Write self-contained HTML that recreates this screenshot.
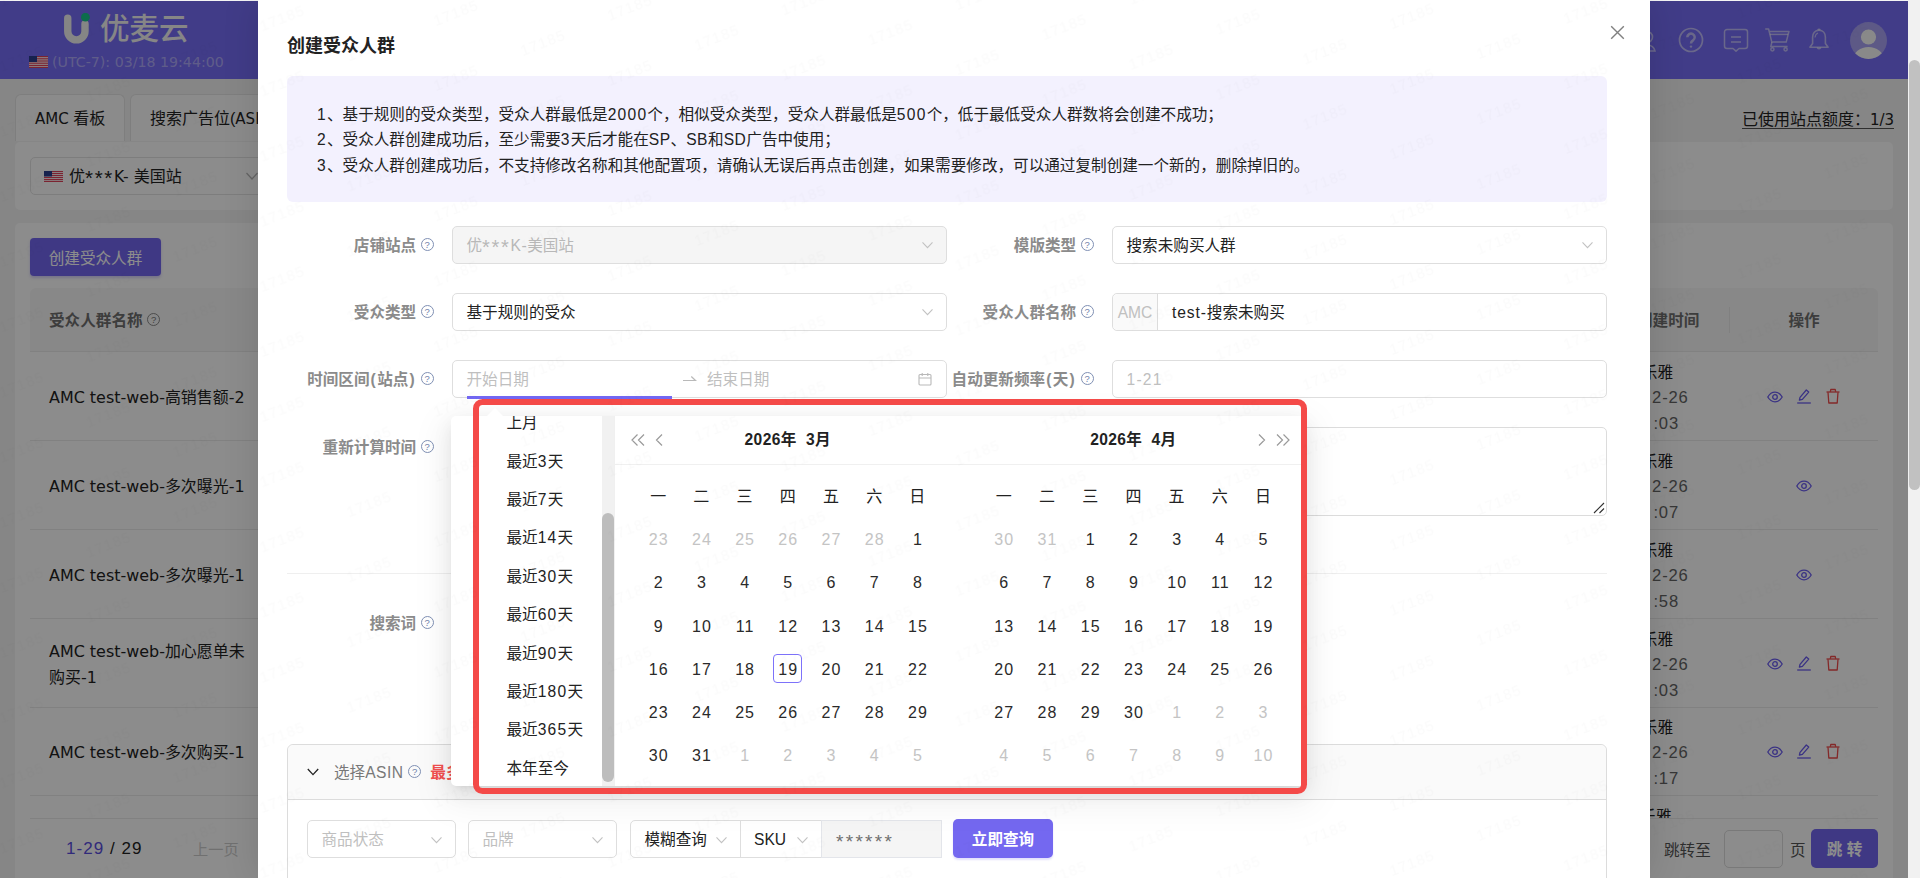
<!DOCTYPE html>
<html lang="zh-CN">
<head>
<meta charset="utf-8">
<title>优麦云 - 创建受众人群</title>
<style>
*{box-sizing:border-box;margin:0;padding:0}
html,body{width:1920px;height:878px;overflow:hidden;background:#fff}
body{position:relative;font-family:"Liberation Sans","Noto Sans CJK SC",sans-serif;font-size:15.6px;color:#222;line-height:1.5}
.abs{position:absolute}
.dj{font-family:"DejaVu Sans","Liberation Sans","Noto Sans CJK SC",sans-serif}
/* ---------- underlying page ---------- */
#page{position:absolute;left:0;top:0;width:1908px;height:878px;background:#f4f4f4;overflow:hidden}
#hdr{position:absolute;left:0;top:1px;width:1908px;height:78px;background:#776ef8}
.card{position:absolute;background:#fff;border-radius:5px}
.tab{position:absolute;top:93.500px;height:47.500px;background:#fdfdfd;border:1px solid #e6e6e6;border-bottom:none;border-radius:6px 6px 0 0;font-size:16px;line-height:48px;color:#222;white-space:nowrap;overflow:hidden}
.trow{position:absolute;left:30px;width:1848px;border-bottom:1px solid #ebebeb}
.tname{position:absolute;left:49px;font-size:15.950px;color:#222;white-space:nowrap;line-height:26px}
.tdate{position:absolute;left:1500px;width:171.500px;height:78px;font-size:15.600px;line-height:25.400px;color:#555;white-space:nowrap}
.tdate b,.tdate span{position:absolute;top:0;font-weight:400;color:#222}
.tdate span{color:#646464;font-size:16.600px;letter-spacing:.850px}
.ico{position:absolute;width:16px;height:16px}
#mask{position:absolute;left:0;top:1px;width:1908px;height:877px;background:rgba(0,0,0,.45)}
/* ---------- page scrollbar ---------- */
#sbar{position:absolute;left:1908px;top:0;width:12px;height:878px;background:#f1f1f1}
#sbar i{position:absolute;left:1px;top:60px;width:11px;height:430px;background:#c1c1c1;border-radius:6px}
/* ---------- modal ---------- */
#modal{position:absolute;left:258px;top:0;width:1392px;height:878px;background:#fff;overflow:hidden;box-shadow:0 0 34px rgba(0,0,0,.130)}
.q{display:inline-block;width:13.500px;height:13.500px;border:1px solid #7f90b4;border-radius:50%;font-size:9.500px;line-height:11px;text-align:center;font-weight:400;color:#6f82aa;vertical-align:3.500px;font-family:"Liberation Sans",sans-serif}
.lbl{position:absolute;font-size:15.600px;font-weight:700;line-height:26px;color:#8b8b8b;white-space:nowrap;text-align:right}
.inp{position:absolute;height:38px;border:1px solid #dedede;border-radius:5px;background:#fff;font-size:15.600px;line-height:38.500px;padding-left:13.500px;color:#222;white-space:nowrap}
#drop{position:absolute;left:451.300px;top:416px;width:854.700px;height:370px;background:#fff;border-radius:5px;box-shadow:0 7px 19px 0 rgba(0,0,0,.080),0 4px 7px -5px rgba(0,0,0,.120),0 11px 34px 10px rgba(0,0,0,.050)}
.ps{position:absolute;left:55.200px;font-size:15.600px;line-height:26px;color:#222;white-space:nowrap}
.c{position:absolute;width:43.200px;margin-left:-21.600px;height:28px;font-size:16px;line-height:30px;text-align:center;color:#2a2a2a;white-space:nowrap;letter-spacing:1.100px;padding-left:1.100px}
.c.w{line-height:28px;color:#222}
.c.o{color:#c4c4c4}
.c.t:after{content:"";box-sizing:border-box;position:absolute;left:6.600px;top:-.800px;width:29px;height:29px;border:1px solid #7d72fa;border-radius:4px}
#red{position:absolute;left:472.500px;top:399px;width:834px;height:394.500px;border:6px solid #f44a48;border-radius:9.500px}
.n{letter-spacing:1.250px}
.l{letter-spacing:.500px}
.pr{letter-spacing:1.500px;margin-left:1px}
#wm{position:absolute;left:0;top:0;pointer-events:none}
</style>
</head>
<body>
<div id="page">
  <div id="hdr">
    <svg class="abs" style="left:62px;top:12px" width="34" height="34" viewBox="0 0 34 34"><path d="M5.75 5.25V18.2A8.625 8.625 0 0 0 23 18.2V11" fill="none" stroke="#f2f2f2" stroke-width="7.4" stroke-linecap="round"/><circle cx="23.4" cy="4.2" r="4.4" fill="#19c58b"/></svg>
    <div class="abs" style="left:100px;top:6px;font-size:29.5px;line-height:44px;color:#f4f4f4;font-weight:500;white-space:nowrap">优麦云</div>
    <svg class="abs" style="left:29px;top:55px" width="19" height="12" viewBox="0 0 19 12"><rect width="19" height="12" fill="#fff"/><g fill="#e0425a"><rect y="0" width="19" height="1.2"/><rect y="2.2" width="19" height="1.2"/><rect y="4.4" width="19" height="1.2"/><rect y="6.6" width="19" height="1.2"/><rect y="8.8" width="19" height="1.2"/><rect y="10.8" width="19" height="1.2"/></g><rect width="8" height="6" fill="#2b3f8f"/></svg>
    <div class="abs dj" style="left:52px;top:50px;font-size:14.2px;line-height:22px;color:rgba(255,255,255,.42);white-space:nowrap">(UTC-7): 03/18 19:44:00</div>
    <!-- right icons -->
    <svg class="abs" style="left:1637.500px;top:26px" width="26" height="26" viewBox="0 0 26 26" fill="none" stroke="rgba(255,255,255,.55)" stroke-width="1.600"><circle cx="9" cy="10" r="5.500"/><path d="M1 24c1-4 4-6 8-6s7 2 8 6z"/></svg>
    <svg class="abs" style="left:1678px;top:26px" width="26" height="26" viewBox="0 0 26 26" fill="none" stroke="rgba(255,255,255,.55)" stroke-width="1.5"><circle cx="13" cy="13" r="11.500" stroke-width="1.700"/><path d="M9.300 10.300a3.700 3.700 0 1 1 5.700 3.100c-1.400.900-2 1.500-2 3.100" stroke-width="2.500"/><circle cx="13" cy="19.600" r="1.200" fill="rgba(255,255,255,.55)" stroke="none"/></svg>
    <svg class="abs" style="left:1723px;top:27px" width="26" height="26" viewBox="0 0 26 26" fill="none" stroke="rgba(255,255,255,.55)" stroke-width="1.5" stroke-linejoin="round"><path d="M4 1.5h18a2.5 2.5 0 0 1 2.500 2.500v14a2.500 2.500 0 0 1-2.500 2.500h-6l-3 2.600-3-2.600h-6a2.500 2.500 0 0 1-2.500-2.500v-14a2.500 2.500 0 0 1 2.500-2.500z"/><path d="M8 9h10M8 14h10"/></svg>
    <svg class="abs" style="left:1764px;top:26px" width="28" height="26" viewBox="0 0 28 26" fill="none" stroke="rgba(255,255,255,.55)" stroke-width="1.500" stroke-linejoin="round"><path d="M1.200 2h3.400l3.200 13.100h14.400l2.750-10.700H5.400"/><path d="M5.900 7.400h18.200"/><path d="M7.900 15.100l-1.100 4.400h16.800"/><circle cx="8.400" cy="22.300" r="1.600"/><circle cx="21.600" cy="22.300" r="1.600"/></svg>
    <svg class="abs" style="left:1807px;top:26px" width="24" height="26" viewBox="0 0 24 26" fill="none" stroke="rgba(255,255,255,.55)" stroke-width="1.600" stroke-linejoin="round"><path d="M12 3.300c-4 0-6.400 3-6.400 7v6.200l-2.700 3.700h18.200l-2.700-3.700v-6.200c0-4-2.400-7-6.400-7z"/><path d="M10.900 3.100a1.200 1.200 0 0 1 2.200 0"/><path d="M10.300 20.500a1.800 1.800 0 0 0 3.400 0"/><path d="M8 10.500c.200-2.200 1.300-3.800 3-4.400" stroke-width="1.100"/></svg>
    <svg class="abs" style="left:1850px;top:21px" width="37" height="37" viewBox="0 0 37 37"><defs><clipPath id="avc"><circle cx="18.500" cy="18.500" r="18.500"/></clipPath></defs><circle cx="18.500" cy="18.500" r="18.500" fill="#a9a2f5"/><g clip-path="url(#avc)" fill="#fafafa"><circle cx="18.500" cy="15" r="7.600"/><ellipse cx="18.500" cy="37" rx="15" ry="12"/></g></svg>
  </div>
  <!--P0-->
  <div class="tab" style="left:14.500px;width:110.500px;padding-left:19.500px"><span class="dj" style="font-size:15px">AMC</span> 看板</div>
  <div class="tab" style="left:130px;width:170px;padding-left:19px">搜索广告位(<span class="dj" style="font-size:15px">ASIN</span>)</div>
  <div class="abs" style="left:1742px;top:107px;font-size:16px;color:#222;white-space:nowrap;border-bottom:1px solid #555;height:22px;line-height:25px">已使用站点额度：<span class="dj" style="font-size:15px">1/3</span></div>
  <div class="card" style="left:15px;top:142px;width:1878px;height:67.500px"></div>
  <div class="abs" style="left:30px;top:156.500px;width:300px;height:38px;border:1px solid #e4e4e4;border-radius:5px;background:#fff"></div>
  <svg class="abs" style="left:44px;top:171px" width="19" height="11" viewBox="0 0 19 11"><rect width="19" height="11" fill="#fff"/><g fill="#e0425a"><rect y="0" width="19" height="1.100"/><rect y="2" width="19" height="1.100"/><rect y="4" width="19" height="1.100"/><rect y="6" width="19" height="1.100"/><rect y="8" width="19" height="1.100"/><rect y="9.900" width="19" height="1.100"/></g><rect width="8" height="5.500" fill="#2b3f8f"/></svg>
  <div class="abs" style="left:69px;top:164px;font-size:16px;line-height:26px;color:#222;white-space:nowrap">优<span style="font-size:20.500px;letter-spacing:1.700px;line-height:0;vertical-align:-2.500px">***</span><span class="dj" style="font-size:15.500px;letter-spacing:.500px">K-</span> 美国站</div>
  <svg class="abs" style="left:245px;top:170px" width="14" height="12" viewBox="0 0 14 12" fill="none" stroke="#b8b8b8" stroke-width="1.300"><path d="M1.500 3l5.500 6 5.500-6"/></svg>
  <div class="card" style="left:15px;top:223px;width:1878px;height:700px"></div>
  <div class="abs" style="left:30px;top:238px;width:131px;height:38px;background:#7467f0;border-radius:4px;color:#fff;font-size:15.600px;line-height:41px;text-align:center;box-shadow:0 2px 3px rgba(116,103,240,.300)">创建受众人群</div>
  <div class="abs" style="left:30px;top:288px;width:1848px;height:64px;background:#f8f8f8;border-bottom:1px solid #ebebeb;border-radius:6px 6px 0 0"></div>
  <div class="abs" style="left:49px;top:308px;font-size:15.600px;font-weight:700;line-height:26px;color:#6f6f6f;white-space:nowrap">受众人群名称 <span class="q" style="border-color:#8a8a8a;color:#777">?</span></div>
  <div class="abs" style="left:1637px;top:308px;font-size:15.600px;font-weight:700;line-height:26px;color:#6f6f6f;white-space:nowrap">创建时间</div>
  <div class="abs" style="left:1729px;top:307px;width:1px;height:26px;background:#e9e9e9"></div>
  <div class="abs" style="left:1788.500px;top:308px;font-size:15.600px;font-weight:700;line-height:26px;color:#6f6f6f;white-space:nowrap">操作</div>
  <div class="trow" style="top:352px;height:89px"></div>
  <div class="tname dj" style="top:384.5px">AMC test-web-高销售额-2</div>
  <div class="tdate" style="top:360px"><b style="right:-1.5px">乐雅</b><span style="top:25.400px;right:-17.2px">2-26</span><span style="top:50.800px;right:-7.5px">:03</span></div>
  <svg class="ico" style="left:1766.5px;top:388.5px" viewBox="0 0 16 16" fill="none" stroke="#6a5cf0" stroke-width="1.300"><path d="M.800 8c1.800-3.100 4.300-4.800 7.200-4.800s5.400 1.700 7.200 4.800c-1.800 3.100-4.300 4.800-7.200 4.800s-5.400-1.700-7.200-4.800z"/><circle cx="8" cy="8" r="2.300"/></svg>
  <svg class="ico" style="left:1796px;top:388px" viewBox="0 0 16 16" fill="none" stroke="#6a5cf0" stroke-width="1.300" stroke-linejoin="round"><path d="M4 9.300l6.300-7.300 2.400 2.100-6.300 7.300-3 .700z"/><path d="M1.200 15h13.600"/></svg>
  <svg class="ico" style="left:1825px;top:388px" viewBox="0 0 16 16" fill="none" stroke="#f04b4b" stroke-width="1.300" stroke-linejoin="round"><path d="M1.500 4h13"/><path d="M5.300 3.800l.500-2.300h4.400l.500 2.300"/><path d="M3 4.200l.800 10.800h8.400l.800-10.800"/></svg>
  <div class="trow" style="top:441px;height:89px"></div>
  <div class="tname dj" style="top:473.5px">AMC test-web-多次曝光-1</div>
  <div class="tdate" style="top:449px"><b style="right:-1.5px">乐雅</b><span style="top:25.400px;right:-17.2px">2-26</span><span style="top:50.800px;right:-7.5px">:07</span></div>
  <svg class="ico" style="left:1795.5px;top:477.5px" viewBox="0 0 16 16" fill="none" stroke="#6a5cf0" stroke-width="1.300"><path d="M.800 8c1.800-3.100 4.300-4.800 7.200-4.800s5.400 1.700 7.200 4.800c-1.800 3.100-4.300 4.800-7.200 4.800s-5.400-1.700-7.200-4.800z"/><circle cx="8" cy="8" r="2.300"/></svg>
  <div class="trow" style="top:530px;height:89px"></div>
  <div class="tname dj" style="top:562.5px">AMC test-web-多次曝光-1</div>
  <div class="tdate" style="top:538px"><b style="right:-1.5px">乐雅</b><span style="top:25.400px;right:-17.2px">2-26</span><span style="top:50.800px;right:-7.5px">:58</span></div>
  <svg class="ico" style="left:1795.5px;top:566.5px" viewBox="0 0 16 16" fill="none" stroke="#6a5cf0" stroke-width="1.300"><path d="M.800 8c1.800-3.100 4.300-4.800 7.200-4.800s5.400 1.700 7.200 4.800c-1.800 3.100-4.300 4.800-7.200 4.800s-5.400-1.700-7.200-4.800z"/><circle cx="8" cy="8" r="2.300"/></svg>
  <div class="trow" style="top:619px;height:89px"></div>
  <div class="tname dj" style="top:638.5px">AMC test-web-加心愿单未<br>购买-1</div>
  <div class="tdate" style="top:627px"><b style="right:-1.5px">乐雅</b><span style="top:25.400px;right:-17.2px">2-26</span><span style="top:50.800px;right:-7.5px">:03</span></div>
  <svg class="ico" style="left:1766.5px;top:655.5px" viewBox="0 0 16 16" fill="none" stroke="#6a5cf0" stroke-width="1.300"><path d="M.800 8c1.800-3.100 4.300-4.800 7.200-4.800s5.400 1.700 7.200 4.800c-1.800 3.100-4.300 4.800-7.200 4.800s-5.400-1.700-7.200-4.800z"/><circle cx="8" cy="8" r="2.300"/></svg>
  <svg class="ico" style="left:1796px;top:655px" viewBox="0 0 16 16" fill="none" stroke="#6a5cf0" stroke-width="1.300" stroke-linejoin="round"><path d="M4 9.300l6.300-7.300 2.400 2.100-6.300 7.300-3 .700z"/><path d="M1.200 15h13.600"/></svg>
  <svg class="ico" style="left:1825px;top:655px" viewBox="0 0 16 16" fill="none" stroke="#f04b4b" stroke-width="1.300" stroke-linejoin="round"><path d="M1.500 4h13"/><path d="M5.300 3.800l.500-2.300h4.400l.500 2.300"/><path d="M3 4.200l.800 10.800h8.400l.800-10.800"/></svg>
  <div class="trow" style="top:707px;height:89px"></div>
  <div class="tname dj" style="top:739.5px">AMC test-web-多次购买-1</div>
  <div class="tdate" style="top:715px"><b style="right:-1.5px">乐雅</b><span style="top:25.400px;right:-17.2px">2-26</span><span style="top:50.800px;right:-7.5px">:17</span></div>
  <svg class="ico" style="left:1766.5px;top:743.5px" viewBox="0 0 16 16" fill="none" stroke="#6a5cf0" stroke-width="1.300"><path d="M.800 8c1.800-3.100 4.300-4.800 7.200-4.800s5.400 1.700 7.200 4.800c-1.800 3.100-4.300 4.800-7.200 4.800s-5.400-1.700-7.200-4.800z"/><circle cx="8" cy="8" r="2.300"/></svg>
  <svg class="ico" style="left:1796px;top:743px" viewBox="0 0 16 16" fill="none" stroke="#6a5cf0" stroke-width="1.300" stroke-linejoin="round"><path d="M4 9.300l6.300-7.300 2.400 2.100-6.300 7.300-3 .700z"/><path d="M1.200 15h13.600"/></svg>
  <svg class="ico" style="left:1825px;top:743px" viewBox="0 0 16 16" fill="none" stroke="#f04b4b" stroke-width="1.300" stroke-linejoin="round"><path d="M1.500 4h13"/><path d="M5.300 3.800l.500-2.300h4.400l.500 2.300"/><path d="M3 4.200l.800 10.800h8.400l.800-10.800"/></svg>
  <div class="tdate" style="top:804px"><b style="right:0">乐雅</b></div>
  <div class="abs" style="left:15px;top:818px;width:1878px;height:60px;background:#fff"></div><div class="abs" style="left:30px;top:818px;width:1848px;height:1px;background:#ececec"></div>
  <div class="abs" style="left:66px;top:835.500px;font-size:17px;line-height:26px;color:#222;white-space:nowrap;letter-spacing:1.050px"><span style="color:#5a4ee0">1-29</span> / 29</div>
  <div class="abs" style="left:193px;top:836.500px;font-size:15.200px;line-height:26px;color:#cdcdcd;white-space:nowrap">上一页</div>
  <div class="abs" style="left:1664px;top:837.500px;font-size:15.600px;line-height:26px;color:#555;white-space:nowrap">跳转至</div>
  <div class="abs" style="left:1723.500px;top:830px;width:59.500px;height:38px;border:1px solid #dcdcdc;border-radius:5px;background:#fff"></div>
  <div class="abs" style="left:1790px;top:837.500px;font-size:15.600px;line-height:26px;color:#555;white-space:nowrap">页</div>
  <div class="abs" style="left:1811px;top:829px;width:67px;height:39px;background:#7467f0;border-radius:5px;color:#fff;font-size:15.600px;font-weight:700;line-height:41.500px;text-align:center;white-space:nowrap">跳 转</div>
  <!--P1-->
</div>
<div id="mask"></div>
<div id="sbar"><i></i></div>
<!--M0-->
<div id="modal">
  <div class="abs" style="left:29px;top:32px;font-size:18px;font-weight:700;line-height:28px;color:#222;white-space:nowrap">创建受众人群</div>
  <svg class="abs" style="left:1352px;top:25px" width="15" height="15" viewBox="0 0 15 15" fill="none" stroke="#808080" stroke-width="1.400"><path d="M1.200 1.200l12.600 12.600M13.800 1.200L1.200 13.800"/></svg>
  <div class="abs" style="left:29px;top:76px;width:1320px;height:126px;background:#f3f1fe;border-radius:6px"></div>
  <div class="abs" style="left:59px;top:102px;font-size:15.600px;line-height:25.300px;color:#222;white-space:nowrap"><span class="n">1</span>、基于规则的受众类型，受众人群最低是<span class="n">2000</span>个，相似受众类型，受众人群最低是<span class="n">500</span>个，低于最低受众人群数将会创建不成功；<br><span class="n">2</span>、受众人群创建成功后，至少需要<span class="n">3</span>天后才能在<span class="l">SP</span>、<span class="l">SB</span>和<span class="l">SD</span>广告中使用；<br><span class="n">3</span>、受众人群创建成功后，不支持修改名称和其他配置项，请确认无误后再点击创建，如果需要修改，可以通过复制创建一个新的，删除掉旧的。</div>
  <div class="lbl" style="right:1216px;top:233px">店铺站点 <span class="q">?</span></div>
  <div class="lbl" style="right:1216px;top:300px">受众类型 <span class="q">?</span></div>
  <div class="lbl" style="right:1216px;top:367px">时间区间<span class="pr">(</span>站点<span class="pr">)</span> <span class="q">?</span></div>
  <div class="lbl" style="right:1216px;top:435px">重新计算时间 <span class="q">?</span></div>
  <div class="lbl" style="right:1216px;top:611px">搜索词 <span class="q">?</span></div>
  <div class="lbl" style="right:556px;top:233px">模版类型 <span class="q">?</span></div>
  <div class="lbl" style="right:556px;top:300px">受众人群名称 <span class="q">?</span></div>
  <div class="lbl" style="right:556px;top:367px">自动更新频率<span class="pr">(</span>天<span class="pr">)</span> <span class="q">?</span></div>
  <div class="inp" style="left:194px;top:226px;width:495px;background:#f5f5f5;color:#b8b8b8">优<span style="letter-spacing:1.700px;font-size:20px;line-height:0;vertical-align:-2.500px">***</span><span class="l">K-</span>美国站<svg class="abs" style="right:12px;top:12px" width="13" height="12" viewBox="0 0 13 12" fill="none" stroke="#c2c2c2" stroke-width="1.100"><path d="M1.500 3.300l5 5.400 5-5.400"/></svg></div>
  <div class="inp" style="left:854px;top:226px;width:495px">搜索未购买人群<svg class="abs" style="right:12px;top:12px" width="13" height="12" viewBox="0 0 13 12" fill="none" stroke="#c2c2c2" stroke-width="1.100"><path d="M1.500 3.300l5 5.400 5-5.400"/></svg></div>
  <div class="inp" style="left:194px;top:293px;width:495px">基于规则的受众<svg class="abs" style="right:12px;top:12px" width="13" height="12" viewBox="0 0 13 12" fill="none" stroke="#c2c2c2" stroke-width="1.100"><path d="M1.500 3.300l5 5.400 5-5.400"/></svg></div>
  <div class="inp" style="left:854px;top:293px;width:495px;padding-left:59px"><span class="abs" style="left:0;top:0;width:45px;height:36px;background:#fafafa;border-right:1px solid #dcdcdc;border-radius:5px 0 0 5px;color:#c0c0c0;text-align:center">AMC</span><span style="letter-spacing:.900px">test-</span>搜索未购买</div>
  <div class="inp" style="left:194px;top:360px;width:495px;color:#bfbfbf">开始日期<span class="abs" style="left:254px;top:0">结束日期</span><svg class="abs" style="left:229px;top:13px" width="15" height="10" viewBox="0 0 15 10" fill="none" stroke="#b9b9b9" stroke-width="1.200"><path d="M1 6.500h12.500l-4.200-4"/></svg><svg class="abs" style="left:465px;top:11px" width="14" height="14" viewBox="0 0 14 14" fill="none" stroke="#b9b9b9" stroke-width="1.100"><rect x="1" y="2.500" width="12" height="10.500" rx="1"/><path d="M1 6h12M4.200 1v3M9.800 1v3"/></svg><i class="abs" style="left:14px;top:35px;width:205px;height:3px;background:#7368f4"></i></div>
  <div class="inp" style="left:854px;top:360px;width:495px;color:#bfbfbf"><span class="n">1-21</span></div>
  <div class="abs" style="left:194px;top:427px;width:1155px;height:89px;border:1px solid #dcdcdc;border-radius:5px;background:#fff"><svg class="abs" style="right:1px;bottom:1px" width="12" height="12" viewBox="0 0 12 12" stroke="#333" stroke-width="1.100"><path d="M11 1L1 11M11 6.500L6.500 11"/></svg></div>
  <div class="abs" style="left:29px;top:573px;width:1320px;height:1px;background:#efefef"></div>
  <div class="abs" style="left:29px;top:744px;width:1320px;height:200px;border:1px solid #dcdcdc;border-radius:6px 6px 0 0;background:#fff"><div style="height:55px;background:#fafafa;border-bottom:1px solid #dcdcdc;border-radius:6px 6px 0 0"></div></div>
  <svg class="abs" style="left:49px;top:766px" width="12" height="12" viewBox="0 0 12 12" fill="none" stroke="#222" stroke-width="1.300"><path d="M.800 3l5.200 5.600 5.200-5.600"/></svg>
  <div class="abs" style="left:76px;top:760px;font-size:15.600px;line-height:26px;color:#787878;white-space:nowrap">选择<span class="l">ASIN</span> <span class="q">?</span> <b style="color:#f25050;margin-left:4.500px">最多可选择1000个</b></div>
  <div class="inp" style="left:49px;top:819.500px;width:149px;color:#bfbfbf">商品状态<svg class="abs" style="right:12px;top:13px" width="13" height="12" viewBox="0 0 13 12" fill="none" stroke="#c2c2c2" stroke-width="1.100"><path d="M1.500 3.300l5 5.400 5-5.400"/></svg></div>
  <div class="inp" style="left:210px;top:819.500px;width:149px;color:#bfbfbf">品牌<svg class="abs" style="right:12px;top:13px" width="13" height="12" viewBox="0 0 13 12" fill="none" stroke="#c2c2c2" stroke-width="1.100"><path d="M1.500 3.300l5 5.400 5-5.400"/></svg></div>
  <div class="inp" style="left:372px;top:819.500px;width:111px;border-radius:5px 0 0 5px">模糊查询<svg class="abs" style="right:12px;top:13px" width="13" height="12" viewBox="0 0 13 12" fill="none" stroke="#c2c2c2" stroke-width="1.100"><path d="M1.500 3.300l5 5.400 5-5.400"/></svg></div>
  <div class="inp" style="left:482px;top:819.500px;width:82px;border-radius:0;padding-left:13px">SKU<svg class="abs" style="right:12px;top:13px" width="13" height="12" viewBox="0 0 13 12" fill="none" stroke="#c2c2c2" stroke-width="1.100"><path d="M1.500 3.300l5 5.400 5-5.400"/></svg></div>
  <div class="inp" style="left:563px;top:819.500px;width:121px;border-radius:0;background:#f5f5f5;color:#707070;border-color:#e3e5ea;font-size:19px;line-height:42px;letter-spacing:2.300px;padding-left:14px">******</div>
  <div class="abs" style="left:695px;top:819px;width:100px;height:39px;background:#7468f0;border-radius:5px;color:#fff;font-size:15.600px;font-weight:700;line-height:41px;text-align:center;white-space:nowrap;box-shadow:0 2px 2px rgba(116,104,240,.200)">立即查询</div>
</div>
<div id="drop"><div class="abs" style="left:36px;top:-8px;width:0;height:0;border-left:8px solid transparent;border-right:8px solid transparent;border-bottom:8px solid #fff"></div>
<div class="abs" style="left:0;top:0;width:163.700px;height:370px;overflow:hidden;border-right:1px solid #f0f0f0"><div class="ps" style="top:-6px">上月</div><div class="ps" style="top:33px">最近<span class="n">3</span>天</div><div class="ps" style="top:71px">最近<span class="n">7</span>天</div><div class="ps" style="top:109px">最近<span class="n">14</span>天</div><div class="ps" style="top:148px">最近<span class="n">30</span>天</div><div class="ps" style="top:186px">最近<span class="n">60</span>天</div><div class="ps" style="top:225px">最近<span class="n">90</span>天</div><div class="ps" style="top:263px">最近<span class="n">180</span>天</div><div class="ps" style="top:301px">最近<span class="n">365</span>天</div><div class="ps" style="top:340px">本年至今</div><div class="abs" style="left:150.700px;top:0;width:12px;height:370px;background:#f1f1f1"><i class="abs" style="left:.400px;top:97px;width:11.300px;height:269px;background:#bdbdbd;border-radius:6px"></i></div></div>
<div class="abs" style="left:163.7px;top:0;width:345.600px;height:370px"><div class="abs" style="left:0;top:0;width:100%;height:48.500px;border-bottom:1px solid #f0f0f0"></div><div class="abs" style="left:0;top:11px;width:100%;text-align:center;font-size:15.600px;font-weight:700;line-height:26px;color:#222;white-space:nowrap;letter-spacing:.350px">2026年&nbsp; 3月</div><svg class="abs" style="left:15px;top:17px" width="34" height="14" viewBox="0 0 34 14" fill="none" stroke="#9a9a9a" stroke-width="1.200"><path d="M7.500 1.500L2 7l5.500 5.500M14 1.500L8.500 7l5.500 5.500M32 1.500L26.500 7l5.500 5.500"/></svg><div class="c w" style="left:43.2px;top:67px">一</div><div class="c w" style="left:86.4px;top:67px">二</div><div class="c w" style="left:129.6px;top:67px">三</div><div class="c w" style="left:172.8px;top:67px">四</div><div class="c w" style="left:216px;top:67px">五</div><div class="c w" style="left:259.2px;top:67px">六</div><div class="c w" style="left:302.4px;top:67px">日</div><div class="c o" style="left:43.2px;top:109.2px">23</div><div class="c o" style="left:86.4px;top:109.2px">24</div><div class="c o" style="left:129.6px;top:109.2px">25</div><div class="c o" style="left:172.8px;top:109.2px">26</div><div class="c o" style="left:216px;top:109.2px">27</div><div class="c o" style="left:259.2px;top:109.2px">28</div><div class="c" style="left:302.4px;top:109.2px">1</div><div class="c" style="left:43.2px;top:152.4px">2</div><div class="c" style="left:86.4px;top:152.4px">3</div><div class="c" style="left:129.6px;top:152.4px">4</div><div class="c" style="left:172.8px;top:152.4px">5</div><div class="c" style="left:216px;top:152.4px">6</div><div class="c" style="left:259.2px;top:152.4px">7</div><div class="c" style="left:302.4px;top:152.4px">8</div><div class="c" style="left:43.2px;top:195.6px">9</div><div class="c" style="left:86.4px;top:195.6px">10</div><div class="c" style="left:129.6px;top:195.6px">11</div><div class="c" style="left:172.8px;top:195.6px">12</div><div class="c" style="left:216px;top:195.6px">13</div><div class="c" style="left:259.2px;top:195.6px">14</div><div class="c" style="left:302.4px;top:195.6px">15</div><div class="c" style="left:43.2px;top:238.8px">16</div><div class="c" style="left:86.4px;top:238.8px">17</div><div class="c" style="left:129.6px;top:238.8px">18</div><div class="c t" style="left:172.8px;top:238.8px">19</div><div class="c" style="left:216px;top:238.8px">20</div><div class="c" style="left:259.2px;top:238.8px">21</div><div class="c" style="left:302.4px;top:238.8px">22</div><div class="c" style="left:43.2px;top:282px">23</div><div class="c" style="left:86.4px;top:282px">24</div><div class="c" style="left:129.6px;top:282px">25</div><div class="c" style="left:172.8px;top:282px">26</div><div class="c" style="left:216px;top:282px">27</div><div class="c" style="left:259.2px;top:282px">28</div><div class="c" style="left:302.4px;top:282px">29</div><div class="c" style="left:43.2px;top:325.2px">30</div><div class="c" style="left:86.4px;top:325.2px">31</div><div class="c o" style="left:129.6px;top:325.2px">1</div><div class="c o" style="left:172.8px;top:325.2px">2</div><div class="c o" style="left:216px;top:325.2px">3</div><div class="c o" style="left:259.2px;top:325.2px">4</div><div class="c o" style="left:302.4px;top:325.2px">5</div></div>
<div class="abs" style="left:509.3px;top:0;width:345.600px;height:370px"><div class="abs" style="left:0;top:0;width:100%;height:48.500px;border-bottom:1px solid #f0f0f0"></div><div class="abs" style="left:0;top:11px;width:100%;text-align:center;font-size:15.600px;font-weight:700;line-height:26px;color:#222;white-space:nowrap;letter-spacing:.350px">2026年&nbsp; 4月</div><svg class="abs" style="right:15px;top:17px" width="34" height="14" viewBox="0 0 34 14" fill="none" stroke="#9a9a9a" stroke-width="1.200"><path d="M26.500 1.500L32 7l-5.500 5.500M20 1.500L25.500 7l-5.500 5.500M2 1.500L7.500 7L2 12.500"/></svg><div class="c w" style="left:43.2px;top:67px">一</div><div class="c w" style="left:86.4px;top:67px">二</div><div class="c w" style="left:129.6px;top:67px">三</div><div class="c w" style="left:172.8px;top:67px">四</div><div class="c w" style="left:216px;top:67px">五</div><div class="c w" style="left:259.2px;top:67px">六</div><div class="c w" style="left:302.4px;top:67px">日</div><div class="c o" style="left:43.2px;top:109.2px">30</div><div class="c o" style="left:86.4px;top:109.2px">31</div><div class="c" style="left:129.6px;top:109.2px">1</div><div class="c" style="left:172.8px;top:109.2px">2</div><div class="c" style="left:216px;top:109.2px">3</div><div class="c" style="left:259.2px;top:109.2px">4</div><div class="c" style="left:302.4px;top:109.2px">5</div><div class="c" style="left:43.2px;top:152.4px">6</div><div class="c" style="left:86.4px;top:152.4px">7</div><div class="c" style="left:129.6px;top:152.4px">8</div><div class="c" style="left:172.8px;top:152.4px">9</div><div class="c" style="left:216px;top:152.4px">10</div><div class="c" style="left:259.2px;top:152.4px">11</div><div class="c" style="left:302.4px;top:152.4px">12</div><div class="c" style="left:43.2px;top:195.6px">13</div><div class="c" style="left:86.4px;top:195.6px">14</div><div class="c" style="left:129.6px;top:195.6px">15</div><div class="c" style="left:172.8px;top:195.6px">16</div><div class="c" style="left:216px;top:195.6px">17</div><div class="c" style="left:259.2px;top:195.6px">18</div><div class="c" style="left:302.4px;top:195.6px">19</div><div class="c" style="left:43.2px;top:238.8px">20</div><div class="c" style="left:86.4px;top:238.8px">21</div><div class="c" style="left:129.6px;top:238.8px">22</div><div class="c" style="left:172.8px;top:238.8px">23</div><div class="c" style="left:216px;top:238.8px">24</div><div class="c" style="left:259.2px;top:238.8px">25</div><div class="c" style="left:302.4px;top:238.8px">26</div><div class="c" style="left:43.2px;top:282px">27</div><div class="c" style="left:86.4px;top:282px">28</div><div class="c" style="left:129.6px;top:282px">29</div><div class="c" style="left:172.8px;top:282px">30</div><div class="c o" style="left:216px;top:282px">1</div><div class="c o" style="left:259.2px;top:282px">2</div><div class="c o" style="left:302.4px;top:282px">3</div><div class="c o" style="left:43.2px;top:325.2px">4</div><div class="c o" style="left:86.4px;top:325.2px">5</div><div class="c o" style="left:129.6px;top:325.2px">6</div><div class="c o" style="left:172.8px;top:325.2px">7</div><div class="c o" style="left:216px;top:325.2px">8</div><div class="c o" style="left:259.2px;top:325.2px">9</div><div class="c o" style="left:302.4px;top:325.2px">10</div></div></div>
<div id="red"></div>
<!--M1-->
<svg id="wm" width="1908" height="878" viewBox="0 0 1908 878"><defs><pattern id="wmp" width="173.8" height="65.15" patternUnits="userSpaceOnUse" patternTransform="matrix(1,-0.03067,0,1,151.45,38.66)"><g font-family="Liberation Sans, sans-serif" font-size="14.8" letter-spacing="1.1" fill="#000" fill-opacity=".017" text-anchor="middle"><text x="44" y="21.4" transform="rotate(-20 43.450 16.290)">17185</text><text x="130.9" y="53.97" transform="rotate(-20 130.350 48.860)">17185</text></g></pattern></defs><rect width="1908" height="878" fill="url(#wmp)"/></svg>
</body>
</html>
